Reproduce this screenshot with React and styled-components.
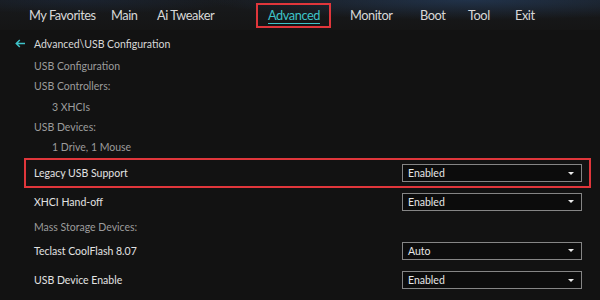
import React from "react";
import styled, { createGlobalStyle } from "styled-components";

const GlobalStyle = createGlobalStyle`
  html, body {
    margin: 0;
    padding: 0;
    background: #121212;
  }
  body {
    font-family: Lato, "Open Sans", sans-serif;
  }
  * {
    box-sizing: border-box;
  }
`;

const Screen = styled.div`
  width: 600px;
  height: 300px;
  overflow: hidden;
  background: #121212;
  display: flex;
  flex-direction: column;
`;

const TabBar = styled.div`
  height: 30px;
  flex-shrink: 0;
  display: flex;
  align-items: center;
  padding-left: 29px;
  background: radial-gradient(ellipse 260px 20px at 470px 0px, rgba(40, 70, 110, 0.55), transparent),
    radial-gradient(ellipse 160px 14px at 80px 0px, rgba(30, 50, 80, 0.35), transparent),
    linear-gradient(#181a1d, #151515);
`;

const Tab = styled.div`
  width: ${(p) => p.w}px;
  flex-shrink: 0;
  display: flex;
`;

const TabLabel = styled.span`
  position: relative;
  line-height: 16px;
  font-size: 12.8px;
  letter-spacing: -0.45px;
  color: ${(p) => (p.active ? "#3ec3c9" : "#d8d8d8")};
  text-decoration: ${(p) => (p.active ? "underline" : "none")};
  text-underline-offset: 3px;
  text-decoration-thickness: 1px;
  white-space: nowrap;
`;

const ActiveFrame = styled.span`
  position: absolute;
  left: -12px;
  right: -11px;
  top: -4px;
  bottom: -5px;
  border: 2px solid #e0363b;
`;

const Body = styled.div`
  flex: 1;
  display: flex;
  flex-direction: column;
`;

const Crumb = styled.div`
  height: 25px;
  margin-top: 1px;
  display: flex;
  align-items: center;
  padding-left: 15px;
  gap: 8px;
  font-size: 10.5px;
  color: #d8d8d8;
`;

const InfoRow = styled.div`
  height: ${(p) => p.h || 20.3}px;
  flex-shrink: 0;
  display: flex;
  align-items: center;
  padding-left: ${(p) => (p.indent ? 52 : 34)}px;
  font-size: 10.5px;
  color: #9c9c9c;
`;

const SettingRow = styled.div`
  height: ${(p) => p.h}px;
  flex-shrink: 0;
  margin: ${(p) => p.mt || 0}px 9px 0 24px;
  display: flex;
  align-items: center;
  justify-content: space-between;
  padding: 0 8px;
  border: 2px solid ${(p) => (p.highlight ? "#e0363b" : "transparent")};
  font-size: 10.5px;
  color: #e2e2e2;
`;

const Select = styled.div`
  width: 180px;
  height: 18px;
  margin-right: -1px;
  border: 1px solid #858585;
  background: #0c0c0c;
  display: flex;
  align-items: center;
  justify-content: space-between;
  padding: 0 7px 0 5px;
  font-size: 10.5px;
  color: #e6e6e6;
`;

const Caret = styled.span`
  width: 0;
  height: 0;
  border-left: 3px solid transparent;
  border-right: 3px solid transparent;
  border-top: 3px solid #eaeaea;
`;

const tabs = [
  { name: "My Favorites", w: 82 },
  { name: "Main", w: 46 },
  { name: "Ai Tweaker", w: 111 },
  { name: "Advanced", w: 82, active: true },
  { name: "Monitor", w: 70 },
  { name: "Boot", w: 48 },
  { name: "Tool", w: 47 },
  { name: "Exit", w: 40 },
];

const BackArrow = () => (
  <svg width="11" height="9" viewBox="0 0 11 9">
    <path d="M10 4.5H1.5M4.8 1L1.3 4.5 4.8 8" fill="none" stroke="#3ec3c9" strokeWidth="1.5" />
  </svg>
);

const Dropdown = ({ value }) => (
  <Select>
    <span>{value}</span>
    <Caret />
  </Select>
);

export default function App() {
  return (
    <>
      <GlobalStyle />
      <Screen>
        <TabBar>
          {tabs.map((t) => (
            <Tab key={t.name} w={t.w}>
              <TabLabel active={t.active}>
                {t.name}
                {t.active && <ActiveFrame />}
              </TabLabel>
            </Tab>
          ))}
        </TabBar>
        <Body>
          <Crumb>
            <BackArrow />
            Advanced\USB Configuration
          </Crumb>
          <InfoRow>USB Configuration</InfoRow>
          <InfoRow>USB Controllers:</InfoRow>
          <InfoRow indent>3 XHCIs</InfoRow>
          <InfoRow>USB Devices:</InfoRow>
          <InfoRow indent>1 Drive, 1 Mouse</InfoRow>
          <SettingRow h={30} mt={1} highlight>
            Legacy USB Support
            <Dropdown value="Enabled" />
          </SettingRow>
          <SettingRow h={27}>
            XHCI Hand-off
            <Dropdown value="Enabled" />
          </SettingRow>
          <InfoRow h={24}>Mass Storage Devices:</InfoRow>
          <SettingRow h={23}>
            Teclast CoolFlash 8.07
            <Dropdown value="Auto" />
          </SettingRow>
          <SettingRow h={30} mt={3}>
            USB Device Enable
            <Dropdown value="Enabled" />
          </SettingRow>
        </Body>
      </Screen>
    </>
  );
}
